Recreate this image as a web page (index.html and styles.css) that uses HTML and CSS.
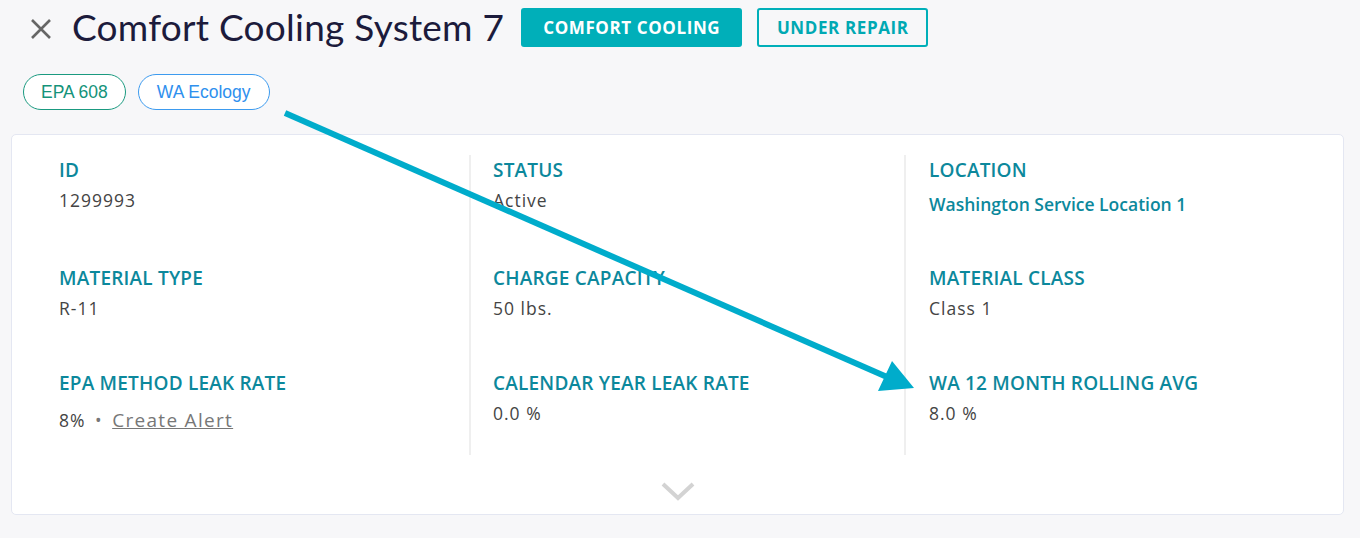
FILE: index.html
```html
<!DOCTYPE html>
<html lang="en">
<head>
  <meta charset="UTF-8" />
  <meta name="viewport" content="width=device-width, initial-scale=1.0"/>
  <title>Comfort Cooling System 7</title>
  <link rel="stylesheet" href="styles.css">
</head>
<body>

<div class="page">
  <!-- Appliance header -->
  <div class="appliance-header">
    <button class="close-btn" title="Close">
      <svg width="22" height="22" viewBox="0 0 22 22">
        <path d="M2 2 L20 20 M20 2 L2 20" stroke="#666" stroke-width="2.6" fill="none"/>
      </svg>
    </button>
    <h1 class="appliance-title">Comfort Cooling System 7</h1>
    <span class="type-btn">COMFORT COOLING</span>
    <span class="status-btn">UNDER REPAIR</span>
  </div>

  <div class="tag-list">
    <span class="tag tag-epa">EPA 608</span>
    <span class="tag tag-wa">WA Ecology</span>
  </div>

  <!-- Details card -->
  <div class="details-card">
    <div class="details-grid">
      <div class="details-col">
        <div class="field">
          <div class="field-label">ID</div>
          <div class="field-value">1299993</div>
        </div>
        <div class="field">
          <div class="field-label">MATERIAL TYPE</div>
          <div class="field-value">R-11</div>
        </div>
        <div class="field">
          <div class="field-label">EPA METHOD LEAK RATE</div>
          <div class="field-value with-action">8% <span class="dot">&bull;</span> <a href="#" class="alert-link">Create Alert</a></div>
        </div>
      </div>

      <div class="details-col">
        <div class="field">
          <div class="field-label">STATUS</div>
          <div class="field-value">Active</div>
        </div>
        <div class="field">
          <div class="field-label">CHARGE CAPACITY</div>
          <div class="field-value">50 lbs.</div>
        </div>
        <div class="field">
          <div class="field-label">CALENDAR YEAR LEAK RATE</div>
          <div class="field-value">0.0 %</div>
        </div>
      </div>

      <div class="details-col">
        <div class="field">
          <div class="field-label">LOCATION</div>
          <a href="#" class="field-value location-link">Washington Service Location 1</a>
        </div>
        <div class="field">
          <div class="field-label">MATERIAL CLASS</div>
          <div class="field-value">Class 1</div>
        </div>
        <div class="field">
          <div class="field-label">WA 12 MONTH ROLLING AVG</div>
          <div class="field-value">8.0 %</div>
        </div>
      </div>
    </div>

    <div class="expand-row">
      <svg width="34" height="22" viewBox="0 0 34 22">
        <path d="M2 3 L17 17 L32 3" stroke="#d3d3d3" stroke-width="4" fill="none"/>
      </svg>
    </div>
  </div>
</div>

<!-- pointer arrow drawn on top -->
<svg class="pointer-arrow" width="1360" height="538" viewBox="0 0 1360 538">
  <line x1="285" y1="113" x2="887" y2="377" stroke="#00accb" stroke-width="6"/>
  <polygon points="878,391 892,361 914,388" fill="#00accb"/>
</svg>

</body>
</html>
```

FILE: styles.css
```css
body {
  font-family: "Open Sans", Arial, sans-serif;
  margin: 0;
  padding: 0;
  background-color: #f7f7f9;
  color: #444;
}
.page {
  padding: 8px 16px 0 11px;
}
.appliance-header {
  display: flex;
  align-items: center;
  height: 39px;
  padding-left: 19px;
}
.close-btn {
  background: none;
  border: none;
  padding: 0;
  width: 22px;
  height: 22px;
  cursor: pointer;
  margin-top: 2px;
}
.appliance-title {
  font-family: Lato, "Open Sans", sans-serif;
  font-weight: 400;
  font-size: 37px;
  color: #1c1b3c;
  margin: -2px 17px 0 20px;
  letter-spacing: 0.25px;
}
.type-btn, .status-btn {
  display: inline-flex;
  align-items: center;
  justify-content: center;
  box-sizing: border-box;
  height: 39px;
  border-radius: 3px;
  font-weight: 700;
  font-size: 17px;
  letter-spacing: 0.6px;
}
.type-btn {
  background-color: #00afb9;
  color: white;
  width: 221px;
}
.status-btn {
  border: 2px solid #00afb9;
  color: #00a9b3;
  width: 171px;
  margin-left: 15px;
}
.tag-list {
  display: flex;
  gap: 12px;
  margin: 27px 0 0 12px;
}
.tag {
  font-family: "Liberation Sans", Arial, sans-serif;
  font-size: 17.5px;
  height: 36px;
  box-sizing: border-box;
  display: inline-flex;
  align-items: center;
  padding: 0 17px;
  border-radius: 18px;
  background: white;
}
.tag-epa {
  border: 1px solid #1a9a80;
  color: #14937a;
}
.tag-wa {
  border: 1px solid #3d9bef;
  color: #2f90ee;
  padding: 0 18px;
}
.details-card {
  margin-top: 24px;
  background: white;
  border: 1px solid #e4e7f2;
  border-radius: 5px;
  height: 381px;
  box-sizing: border-box;
  padding: 20px 4px 0 22px;
}
.details-grid {
  display: grid;
  grid-template-columns: repeat(3, 1fr);
  height: 300px;
}
.details-col {
  display: grid;
  grid-template-rows: 108px 105px 1fr;
  padding: 2px 0 0 25px;
}
.details-col + .details-col {
  border-left: 2px solid #efefef;
  padding-left: 22px;
}
.details-col:last-child {
  padding-left: 23px;
}
.field-label {
  font-weight: 600;
  font-size: 19px;
  letter-spacing: 0.2px;
  line-height: 26px;
  color: #0c889c;
}
.field-value {
  font-size: 17.5px;
  line-height: 28px;
  letter-spacing: 1px;
  color: #444;
  margin-top: 3px;
}
.location-link {
  display: block;
  font-weight: 600;
  letter-spacing: 0;
  color: #0c889c;
  text-decoration: none;
  margin-top: 7px;
}
.with-action {
  margin-top: 10px;
}
.dot {
  color: #777;
  margin: 0 4px;
}
.alert-link {
  color: #777;
  font-size: 19px;
  letter-spacing: 1.3px;
  text-decoration: underline;
}
.expand-row {
  display: flex;
  justify-content: center;
  margin: 0 -4px 0 -22px;
  padding-top: 26px;
}
.pointer-arrow {
  position: absolute;
  top: 0;
  left: 0;
  pointer-events: none;
}
```
